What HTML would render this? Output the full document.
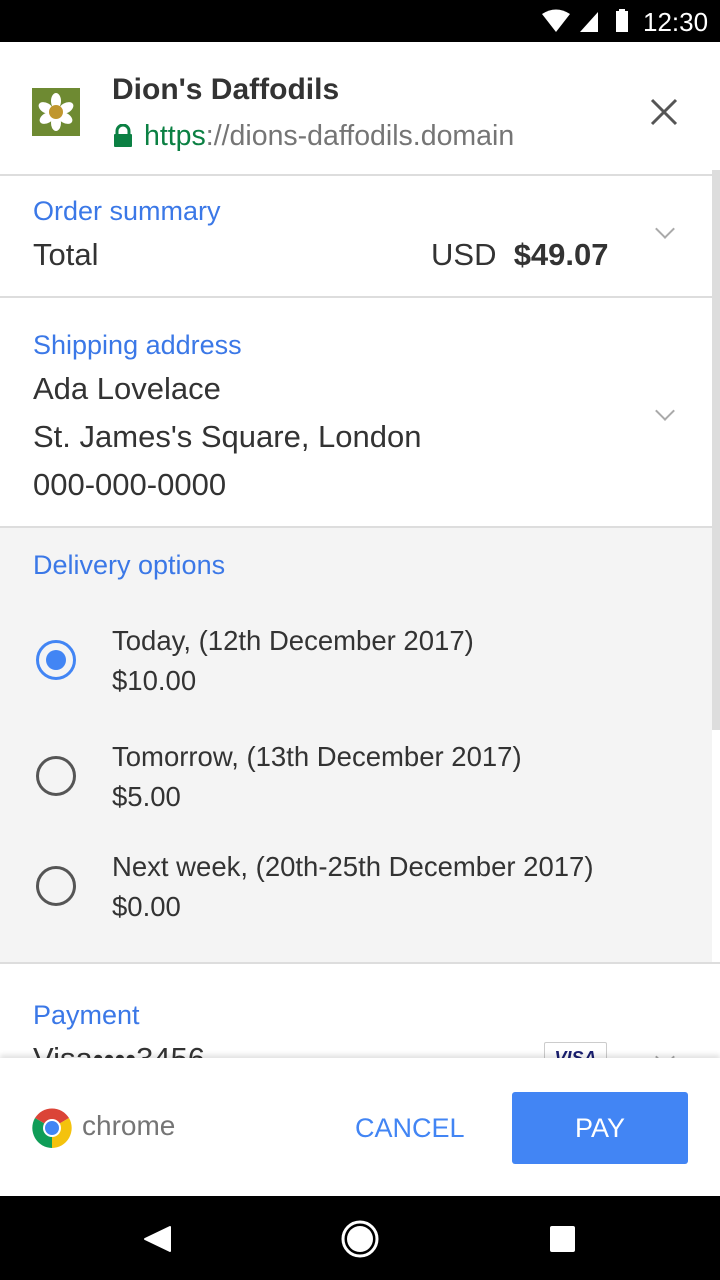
<!DOCTYPE html>
<html><head><style>
*{margin:0;padding:0;box-sizing:border-box}
body{width:720px;height:1280px;overflow:hidden;background:#fff;font-family:"Liberation Sans",sans-serif;position:relative;color:#333}
.a{position:absolute;white-space:nowrap}
.lbl{font-size:27px;color:#3b78e7}
.txt{font-size:31px;color:#333}
.hr{position:absolute;left:0;width:720px;height:2px;background:#ddd}
.chev{position:absolute;width:14px;height:14px;border-right:2.5px solid #aaa;border-bottom:2.5px solid #aaa;transform:rotate(45deg)}
.radio{position:absolute;left:36px;width:40px;height:40px;border-radius:50%;border:3px solid #555}
.opt{font-size:27.5px;color:#333;line-height:40px}
</style></head><body>
<div class="a" style="left:0;top:0;width:720px;height:42px;background:#000"></div>
<svg class="a" style="left:540px;top:8px" width="100" height="26" viewBox="0 0 100 26">
<path d="M2 6 Q16 -3 30 6 L16 24 Z" fill="#fff"/>
<path d="M58 4 L58 24 L40 24 Z" fill="#fff"/>
<rect x="76" y="3" width="12" height="21" fill="#fff"/><rect x="79" y="1" width="6" height="3" fill="#fff"/>
</svg>
<div class="a" style="left:643px;top:7px;font-size:26px;color:#fff">12:30</div>

<div class="a" style="left:32px;top:88px;width:48px;height:48px;background:#6e8a32"></div>
<svg class="a" style="left:32px;top:88px" width="48" height="48" viewBox="0 0 48 48">
<g fill="#fff"><ellipse cx="24" cy="13" rx="5" ry="8"/><ellipse cx="24" cy="35" rx="5" ry="8"/><ellipse cx="14" cy="20" rx="8" ry="5" transform="rotate(30 14 20)"/><ellipse cx="34" cy="20" rx="8" ry="5" transform="rotate(-30 34 20)"/><ellipse cx="15" cy="30" rx="8" ry="5" transform="rotate(-30 15 30)"/><ellipse cx="33" cy="30" rx="8" ry="5" transform="rotate(30 33 30)"/></g>
<circle cx="24" cy="24" r="7" fill="#c0962e"/></svg>
<div class="a" style="left:112px;top:73px;font-size:30px;font-weight:bold;color:#333">Dion's Daffodils</div>
<svg class="a" style="left:113px;top:124px" width="20" height="24" viewBox="0 0 20 24"><path d="M4 11 V7 a6 6 0 0 1 12 0 V11" stroke="#0b8043" stroke-width="3" fill="none"/><rect x="1" y="10" width="18" height="13" rx="1" fill="#0b8043"/></svg>
<div class="a" style="left:144px;top:120px;font-size:28.5px;color:#757575"><span style="color:#0b8043">https</span>://dions-daffodils.domain</div>
<svg class="a" style="left:648px;top:96px" width="32" height="32"><path d="M4 4 L28 28 M28 4 L4 28" stroke="#555" stroke-width="3"/></svg>
<div class="hr" style="top:174px"></div>
<div class="a" style="left:712px;top:170px;width:8px;height:560px;background:#ddd"></div>

<div class="a lbl" style="left:33px;top:196px">Order summary</div>
<div class="a txt" style="left:33px;top:237px">Total</div>
<div class="a txt" style="left:431px;top:237px">USD&nbsp; <b>$49.07</b></div>
<div class="chev" style="left:658px;top:222px"></div>
<div class="hr" style="top:296px"></div>

<div class="a lbl" style="left:33px;top:330px">Shipping address</div>
<div class="a txt" style="left:33px;top:371px">Ada Lovelace</div>
<div class="a txt" style="left:33px;top:419px">St. James's Square, London</div>
<div class="a txt" style="left:33px;top:467px">000-000-0000</div>
<div class="chev" style="left:658px;top:404px"></div>
<div class="hr" style="top:526px"></div>

<div class="a" style="left:0;top:528px;width:712px;height:434px;background:#f4f4f4"></div>
<div class="a lbl" style="left:33px;top:550px">Delivery options</div>
<div class="radio" style="top:640px;border-color:#4285f4"><div style="position:absolute;left:7px;top:7px;width:20px;height:20px;border-radius:50%;background:#4285f4"></div></div>
<div class="a opt" style="left:112px;top:621px">Today, (12th December 2017)<br>$10.00</div>
<div class="radio" style="top:756px"></div>
<div class="a opt" style="left:112px;top:737px">Tomorrow, (13th December 2017)<br>$5.00</div>
<div class="radio" style="top:866px"></div>
<div class="a opt" style="left:112px;top:847px">Next week, (20th-25th December 2017)<br>$0.00</div>
<div class="hr" style="top:962px"></div>

<div class="a lbl" style="left:33px;top:1000px">Payment</div>
<div class="a txt" style="left:33px;top:1041px">Visa••••3456</div>
<div class="a" style="left:544px;top:1042px;width:63px;height:30px;border:1px solid #ccc;border-radius:2px;font-size:18px;font-weight:bold;font-style:italic;color:#1a1f71;text-align:center;padding-top:5px">VISA</div>
<div class="chev" style="left:658px;top:1050px"></div>

<div class="a" style="left:0;top:1058px;width:720px;height:138px;background:#fff;box-shadow:0 -3px 5px rgba(0,0,0,0.12)"></div>
<svg class="a" style="left:32px;top:1108px" width="40" height="40" viewBox="0 0 40 40">
<path d="M20 20 L3 10 A20 20 0 0 1 37 10 Z" fill="#db4437"/>
<path d="M20 20 L37 10 A20 20 0 0 1 20 40 Z" fill="#f4c20d"/>
<path d="M20 20 L20 40 A20 20 0 0 1 3 10 Z" fill="#0f9d58"/>
<circle cx="20" cy="20" r="9" fill="#fff"/><circle cx="20" cy="20" r="7" fill="#4285f4"/></svg>
<div class="a" style="left:82px;top:1110px;font-size:28px;color:#757575">chrome</div>
<div class="a" style="left:355px;top:1113px;font-size:27px;color:#4285f4">CANCEL</div>
<div class="a" style="left:512px;top:1092px;width:176px;height:72px;background:#4285f4;border-radius:3px;color:#fff;font-size:27px;text-align:center;line-height:72px">PAY</div>

<div class="a" style="left:0;top:1196px;width:720px;height:84px;background:#000"></div>
<svg class="a" style="left:140px;top:1210px" width="460" height="60" viewBox="0 0 460 60">
<path d="M30 17 L30 41 L5 29 Z" fill="#fff" stroke="#fff" stroke-linejoin="round" stroke-width="2"/>
<circle cx="220" cy="29" r="17" fill="none" stroke="#fff" stroke-width="3"/><circle cx="220" cy="29" r="13" fill="#fff"/>
<rect x="410" y="16" width="25" height="26" rx="2" fill="#fff"/></svg>
</body></html>
